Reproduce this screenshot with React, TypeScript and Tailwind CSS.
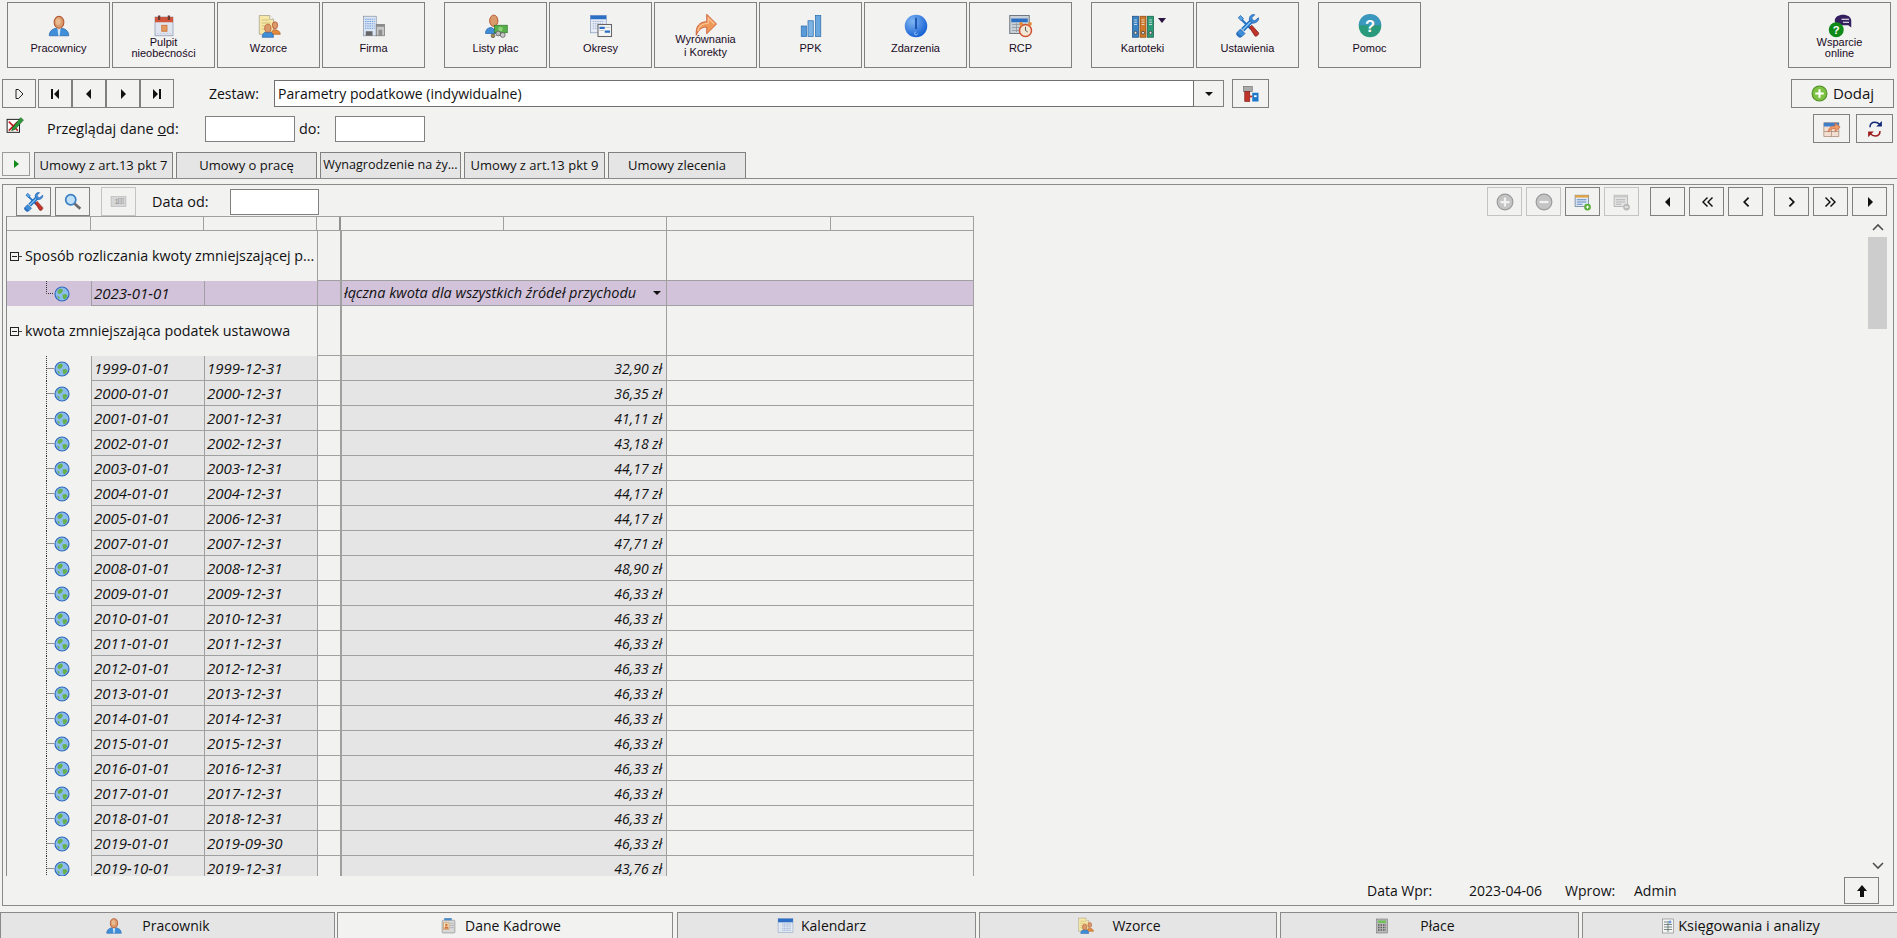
import React from "react";

type P = { s?: number };
const Svg = ({ s = 24, children }: P & { children: React.ReactNode }) => (
  <svg width={s} height={s} viewBox="0 0 32 32" className="shrink-0">{children}</svg>
);

const Bust = () => (
  <>
    <path d="M3 29c0-6 4-9 9-10l4 3 4-3c5 1 9 4 9 10z" fill="#3f8fd8" stroke="#2a68ad" />
    <path d="M14 20h4l-1 9h-2z" fill="#cfe3f4" />
    <ellipse cx="16" cy="11" rx="6.5" ry="8" fill="#d99a6c" stroke="#b5532c" strokeWidth="1.4" />
    <ellipse cx="15" cy="10" rx="3.4" ry="4.5" fill="#e9b98f" />
  </>
);
const IPerson = ({ s }: P) => <Svg s={s}><Bust /></Svg>;
const ICalendar = ({ s }: P) => (
  <Svg s={s}>
    <rect x="4" y="4" width="24" height="25" fill="#dfe4ef" stroke="#8d9bb3" />
    <rect x="4" y="4" width="24" height="7" fill="#d0553b" />
    <rect x="8" y="2" width="3" height="6" fill="#6b3b30" />
    <rect x="21" y="2" width="3" height="6" fill="#6b3b30" />
    <rect x="13" y="15" width="7" height="8" fill="#e39a5c" stroke="#c96a35" />
    <path d="M7 26h18" stroke="#b5bccb" strokeDasharray="2 2" />
  </Svg>
);
const IWzorce = ({ s }: P) => (
  <Svg s={s}>
    <path d="M3 2h14l5 5v20H3z" fill="#f5e8a8" stroke="#a5a08a" />
    <path d="M6 8h10M6 12h12M6 16h6M6 20h5" stroke="#c9b36a" />
    <path d="M17 2v5h5" fill="#fff" stroke="#a5a08a" />
    <ellipse cx="24" cy="15" rx="3.6" ry="4.6" fill="#d99a6c" stroke="#b5532c" />
    <path d="M19 27c0-4 2-6 5-6s7 2 7 6z" fill="#e38b3a" stroke="#b5632c" />
    <path d="M7 31c0-5 3-7 6-7h3c3 0 6 2 6 7z" fill="#3f8fd8" stroke="#2a68ad" />
    <ellipse cx="14.5" cy="19" rx="4.2" ry="5.4" fill="#d99a6c" stroke="#b5532c" />
  </Svg>
);
const IFirma = ({ s }: P) => (
  <Svg s={s}>
    <rect x="2" y="3" width="17" height="26" fill="#dbe6f5" stroke="#8c97a8" />
    <path d="M4 7h13M4 10h13M4 13h13M4 16h13M4 19h13" stroke="#6f9bd6" strokeDasharray="2 1" strokeWidth="1.6" />
    <rect x="5" y="23" width="9" height="6" fill="#666" />
    <rect x="19" y="14" width="11" height="15" fill="#c8c8c8" stroke="#777" />
    <rect x="19" y="14" width="11" height="3" fill="#8a8a8a" />
    <rect x="22" y="21" width="5" height="8" fill="#8e8e8e" />
  </Svg>
);
const IListy = ({ s }: P) => (
  <Svg s={s}>
    <path d="M2 26c0-5 3-8 8-8l3 2 3-2c3 0 5 1 6 3v5z" fill="#3f8fd8" stroke="#2a68ad" />
    <ellipse cx="13" cy="9" rx="5.5" ry="7.5" fill="#d99a6c" stroke="#b5532c" strokeWidth="1.3" />
    <rect x="14" y="15" width="17" height="10" fill="#58b04a" stroke="#2f7a2b" />
    <circle cx="22" cy="20" r="3" fill="#8fd178" />
    <circle cx="12" cy="29" r="2.5" fill="#a58a4b" stroke="#555" />
    <circle cx="19" cy="26" r="3.2" fill="#bbb" stroke="#555" />
    <circle cx="25" cy="28" r="3.2" fill="#ccc" stroke="#555" />
  </Svg>
);
const IOkresy = ({ s }: P) => (
  <Svg s={s}>
    <rect x="2" y="2" width="21" height="23" fill="#e6ebf6" stroke="#8ba0c0" />
    <rect x="2" y="2" width="21" height="5" fill="#2d6fc4" />
    <path d="M5 10h15M5 13h15M5 16h15M5 19h15" stroke="#a3b3cf" strokeWidth="1.5" strokeDasharray="2 1" />
    <rect x="12" y="14" width="18" height="16" fill="#f5f5f5" stroke="#666" strokeWidth="1.4" />
    <rect x="14" y="17" width="7" height="3" fill="#2d6fc4" />
    <rect x="21" y="22" width="7" height="3" fill="#2d6fc4" />
    <path d="M14 22h6M22 18h6" stroke="#bbb" />
  </Svg>
);
const IArrow = ({ s }: P) => (
  <Svg s={s}>
    <path d="M3 31C2 19 7 13 17 13V3l13 13-13 13v-9c-7 0-11 4-14 11z" fill="#f09a5a" stroke="#c95a33" strokeWidth="1.2" />
    <path d="M5 25c2-7 6-10 14-10V8l8 8" fill="none" stroke="#fbc79a" strokeWidth="1.5" />
  </Svg>
);
const IPPK = ({ s }: P) => (
  <Svg s={s}>
    <rect x="3" y="16" width="7" height="14" fill="#5a9ad8" stroke="#2d6fb0" />
    <rect x="12" y="9" width="7" height="21" fill="#7eb4e4" stroke="#2d6fb0" />
    <rect x="22" y="2" width="7" height="28" fill="#6aa7de" stroke="#2d6fb0" />
  </Svg>
);
const IZdarzenia = ({ s }: P) => (
  <Svg s={s}>
    <defs>
      <radialGradient id="zd" cx="0.35" cy="0.3" r="0.8">
        <stop offset="0" stopColor="#7fb6f2" />
        <stop offset="1" stopColor="#0b57d0" />
      </radialGradient>
    </defs>
    <circle cx="16" cy="16" r="15" fill="url(#zd)" />
    <path d="M16 5v15" stroke="#0a3f9e" strokeWidth="2" />
    <path d="M16 24a2 2 0 1 0 2 2" fill="none" stroke="#9cc4f4" strokeWidth="1.2" />
  </Svg>
);
const IRcp = ({ s }: P) => (
  <Svg s={s}>
    <rect x="1" y="2" width="26" height="24" fill="#c9d0d6" stroke="#6d7680" strokeWidth="1.3" />
    <rect x="3" y="6" width="22" height="5" fill="#2d6fc4" />
    <path d="M4 14h20M4 18h20M4 22h20M10 12v12M17 12v12" stroke="#8a94a0" />
    <circle cx="22" cy="22" r="8" fill="#f2e7d5" stroke="#d2502e" strokeWidth="2" />
    <path d="M22 17v5l3 2" fill="none" stroke="#555" strokeWidth="1.3" />
    <circle cx="16" cy="13" r="2.5" fill="#e48a35" />
    <circle cx="28" cy="13" r="2.5" fill="#e48a35" />
  </Svg>
);
const IKartoteki = ({ s }: P) => (
  <Svg s={s}>
    <rect x="2" y="3" width="8" height="28" fill="#3a83c4" stroke="#1f4f80" />
    <rect x="12" y="3" width="8" height="28" fill="#d07a2a" stroke="#8a4a14" />
    <rect x="22" y="3" width="8" height="28" fill="#2d9a78" stroke="#17604a" />
    <path d="M4 8h4M4 11h4M4 14h4M14 8h4M14 11h4M14 14h4M24 8h4M24 11h4M24 14h4" stroke="#eee" />
    <circle cx="6" cy="25" r="2" fill="#e5e5e5" stroke="#333" />
    <circle cx="16" cy="25" r="2" fill="#e5e5e5" stroke="#333" />
    <circle cx="26" cy="25" r="2" fill="#e5e5e5" stroke="#333" />
  </Svg>
);
const ITools = ({ s }: P) => (
  <Svg s={s}>
    <path d="M7 7l13 13" stroke="#2a76c8" strokeWidth="3" />
    <path d="M3 5l3-3 4 4-3 3z" fill="#5aa6e6" stroke="#1d5fb0" />
    <path d="M18 18l3-3 9 10c1 2-3 6-5 4z" fill="#c0342a" stroke="#7d1a14" />
    <path d="M9 21L21 9" stroke="#1d6fc4" strokeWidth="6" />
    <path d="M9 21L21 9" stroke="#8cc8f2" strokeWidth="2" />
    <path d="M30 5l-5 4-3-1-1-3 4-4c-4-1-8 2-7 7l3 4c4 1 10-2 9-7z" fill="#3f8ed8" stroke="#1d5fb0" />
    <path d="M2 26l5 4-1 1c-3 0-6-3-5-6l1 1zM2 24l4-4 6 6-4 4c-4 1-7-2-6-6z" fill="#3f8ed8" stroke="#1d5fb0" />
  </Svg>
);
const IHelp = ({ s }: P) => (
  <Svg s={s}>
    <circle cx="16" cy="16" r="15" fill="#2a9a7c" />
    <path d="M1 15a15 15 0 0 1 30 0z" fill="#3a97bd" />
    <text x="16" y="24" textAnchor="middle" fontSize="22" fontWeight="700" fill="#fff" fontFamily="Liberation Sans, sans-serif">?</text>
  </Svg>
);
const ISupport = ({ s }: P) => (
  <Svg s={s}>
    <path d="M9 9c0-5 5-8 11-8s11 3 11 8v9l-4-3H18c-5 0-9-2-9-6z" fill="#35205f" />
    <path d="M18 7h10M20 11h8" stroke="#fff" strokeWidth="1.4" />
    <circle cx="11" cy="21" r="10" fill="#0f8a18" />
    <text x="11" y="27" textAnchor="middle" fontSize="15" fontWeight="700" fill="#fff" fontFamily="Liberation Sans, sans-serif">?</text>
  </Svg>
);
const IPlus = ({ s, off }: P & { off?: boolean }) => (
  <Svg s={s}>
    <circle cx="16" cy="16" r="14" fill={off ? "#c4c4c4" : "#7dc142"} stroke={off ? "#999" : "#4d8f24"} strokeWidth="2" />
    <path d="M16 8v16M8 16h16" stroke={off ? "#f1f1f1" : "#fff"} strokeWidth="4" />
  </Svg>
);
const IMinus = ({ s }: P) => (
  <Svg s={s}>
    <circle cx="16" cy="16" r="14" fill="#c4c4c4" stroke="#999" strokeWidth="2" />
    <path d="M8 16h16" stroke="#f1f1f1" strokeWidth="4" />
  </Svg>
);
const ISheet = ({ s, off }: P & { off?: boolean }) => (
  <Svg s={s}>
    <rect x="2" y="4" width="24" height="20" fill={off ? "#e5e5e5" : "#dfe8f4"} stroke={off ? "#aaa" : "#6b7f99"} strokeWidth="1.4" />
    <rect x="2" y="4" width="24" height="4" fill={off ? "#c9c9c9" : "#e4a23d"} />
    <path d="M5 12h17M5 16h17M5 20h10" stroke={off ? "#aaa" : "#4a79b5"} strokeWidth="1.5" />
    <circle cx="24" cy="25" r="6" fill={off ? "#bbb" : "#56ad35"} />
    <path d={off ? "M21 25h6" : "M24 22v6M21 25h6"} stroke="#fff" strokeWidth="1.8" />
  </Svg>
);
const IGlobe = ({ s = 16 }: P) => (
  <Svg s={s}>
    <circle cx="16" cy="16" r="14" fill="#8abdec" stroke="#3268bd" strokeWidth="2.4" />
    <path d="M8 8l6-3 4 3-2 5-5 3-4-2zM17 17l7-1 3 4-5 7-4-2zM6 19l4 2 2 4-3 0z" fill="#66b04e" />
  </Svg>
);
const IStamp = ({ s }: P) => (
  <Svg s={s}>
    <rect x="4" y="4" width="14" height="8" fill="#aaa" stroke="#666" />
    <rect x="6" y="12" width="8" height="16" fill="#c0342a" stroke="#7d1a14" />
    <rect x="18" y="14" width="10" height="14" fill="#1c78c8" />
    <rect x="21" y="18" width="4" height="3" fill="#fff" />
    <path d="M14 20h4" stroke="#c0342a" strokeWidth="3" />
  </Svg>
);
const IExport = ({ s }: P) => (
  <Svg s={s}>
    <rect x="3" y="6" width="24" height="22" fill="#f3dfd1" stroke="#9a7a66" />
    <rect x="3" y="6" width="24" height="6" fill="#3f7fca" />
    <path d="M3 20h24M15 12v16" stroke="#9a7a66" />
    <path d="M10 21c0-7 5-10 11-10V6l8 7-8 7v-5c-5 0-8 2-11 6z" fill="#ef9a68" stroke="#c8643a" />
  </Svg>
);
const IRefresh = ({ s }: P) => (
  <Svg s={s}>
    <path d="M8 13c0-5 3-8 8-8 3 0 5 1 7 3" fill="none" stroke="#142a78" strokeWidth="2.4" />
    <path d="M27 3v9h-9z" fill="#142a78" />
    <path d="M24 19c0 5-3 8-8 8-3 0-5-1-7-3" fill="none" stroke="#9c1c1c" strokeWidth="2.4" />
    <path d="M5 29v-9h9z" fill="#9c1c1c" />
  </Svg>
);
const ICheckPen = ({ s }: P) => (
  <Svg s={s}>
    <rect x="2" y="6" width="22" height="23" fill="#fff" stroke="#222" strokeWidth="1.8" />
    <path d="M5 26L21 10M5 10l16 16" stroke="#c21818" strokeWidth="2.8" />
    <path d="M12 20L26 3l5 4-15 17-6 2z" fill="#2c9a3a" stroke="#114d18" />
  </Svg>
);
const ICard = ({ s }: P) => (
  <Svg s={s}>
    <rect x="8" y="2" width="14" height="6" fill="#4a8fd0" />
    <rect x="4" y="6" width="24" height="24" rx="2" fill="#d8d8d8" stroke="#777" />
    <rect x="7" y="11" width="10" height="12" fill="#f3e3c4" stroke="#c7873e" />
    <circle cx="12" cy="15" r="2.4" fill="#d2743a" />
    <path d="M8 22c0-3 2-4 4-4s4 1 4 4z" fill="#d2743a" />
    <path d="M19 12h7M19 16h7M19 20h7" stroke="#999" />
  </Svg>
);
const IMonth = ({ s }: P) => (
  <Svg s={s}>
    <rect x="2" y="3" width="28" height="26" fill="#dfe7f3" stroke="#8ca2c2" />
    <rect x="2" y="3" width="28" height="7" fill="#2d6fc4" />
    <path d="M10 13h16M10 17h16M10 21h16M10 25h16" stroke="#98aed0" strokeWidth="2" strokeDasharray="2 1" />
  </Svg>
);
const ICalc = ({ s }: P) => (
  <Svg s={s}>
    <rect x="5" y="2" width="22" height="28" fill="#b9b9b9" stroke="#666" />
    <rect x="8" y="5" width="16" height="5" fill="#6fc05a" />
    <path d="M8 14h16M8 19h16M8 24h16" stroke="#5a5a5a" strokeWidth="3" strokeDasharray="3 2" />
  </Svg>
);
const IBook = ({ s }: P) => (
  <Svg s={s}>
    <rect x="5" y="2" width="22" height="28" fill="#f4f4f4" stroke="#666" />
    <path d="M8 8h7M8 13h16M8 18h16M8 23h16M16 6v22" stroke="#5c6f6a" strokeWidth="1.6" />
    <path d="M20 5v6M17 8h6" stroke="#2266cc" strokeWidth="1.6" />
  </Svg>
);
const INumbers = ({ s }: P) => (
  <Svg s={s}>
    <rect x="2" y="7" width="28" height="18" fill="#d6d6d6" stroke="#aaa" />
    <text x="9" y="21" fontSize="13" fill="#888" fontFamily="Liberation Sans, sans-serif">1</text>
    <path d="M15 11h12M15 15h12M15 19h12" stroke="#999" strokeWidth="2" strokeDasharray="2 1" />
  </Svg>
);
const IMag = ({ s }: P) => (
  <Svg s={s}>
    <circle cx="12" cy="12" r="9" fill="#bfe0f8" stroke="#3a7fc4" strokeWidth="3" />
    <path d="M19 19l10 9" stroke="#6b6b6b" strokeWidth="5" />
  </Svg>
);

const Tri = ({ d, className = "" }: { d: string; className?: string }) => (
  <svg width="16" height="16" viewBox="0 0 16 16" className={className}><path d={d} fill="#111" /></svg>
);

const tools: [string, React.ReactNode, string][] = [
  ["Pracownicy", <IPerson />, ""],
  ["Pulpit\nnieobecności", <ICalendar />, ""],
  ["Wzorce", <IWzorce />, ""],
  ["Firma", <IFirma />, ""],
  ["Listy płac", <IListy />, "ml-[17px]"],
  ["Okresy", <IOkresy />, ""],
  ["Wyrównania\ni Korekty", <IArrow />, ""],
  ["PPK", <IPPK />, ""],
  ["Zdarzenia", <IZdarzenia />, ""],
  ["RCP", <IRcp />, ""],
  ["Kartoteki", <IKartoteki />, "ml-[17px]"],
  ["Ustawienia", <ITools />, ""],
  ["Pomoc", <IHelp />, "ml-[17px]"],
];

const ToolBtn = ({ label, icon, extra = "", caret }: { label: string; icon: React.ReactNode; extra?: string; caret?: boolean }) => {
  const wide = label.startsWith("Wyr");
  return (
    <div className={`relative flex h-[66px] w-[103px] shrink-0 flex-col items-center border border-[#808080] ${wide ? "pt-[10px]" : "pt-[12px]"} ${extra}`}>
      <div className="flex h-[22px] items-center justify-center">{icon}</div>
      <div className={`flex h-[22px] flex-col items-center justify-center text-center text-[11px] text-[#1a0a24] ${wide ? "leading-[13px]" : "leading-[11px]"}`}>
        {label.split("\n").map((l) => <span key={l}>{l}</span>)}
      </div>
      {caret && <span className="absolute left-[66px] top-[15px] h-0 w-0 border-x-[4px] border-t-[5px] border-x-transparent border-t-[#2a1440]" />}
    </div>
  );
};

const Btn = ({ w, children, off, extra = "" }: { w: string; children?: React.ReactNode; off?: boolean; extra?: string }) => (
  <div className={`flex h-[29px] shrink-0 items-center justify-center border ${off ? "border-[#c4c4c4]" : "border-[#808080]"} ${w} ${extra}`}>{children}</div>
);

const rows: [string, string, string][] = [
  ["1999-01-01", "1999-12-31", "32,90 zł"],
  ["2000-01-01", "2000-12-31", "36,35 zł"],
  ["2001-01-01", "2001-12-31", "41,11 zł"],
  ["2002-01-01", "2002-12-31", "43,18 zł"],
  ["2003-01-01", "2003-12-31", "44,17 zł"],
  ["2004-01-01", "2004-12-31", "44,17 zł"],
  ["2005-01-01", "2006-12-31", "44,17 zł"],
  ["2007-01-01", "2007-12-31", "47,71 zł"],
  ["2008-01-01", "2008-12-31", "48,90 zł"],
  ["2009-01-01", "2009-12-31", "46,33 zł"],
  ["2010-01-01", "2010-12-31", "46,33 zł"],
  ["2011-01-01", "2011-12-31", "46,33 zł"],
  ["2012-01-01", "2012-12-31", "46,33 zł"],
  ["2013-01-01", "2013-12-31", "46,33 zł"],
  ["2014-01-01", "2014-12-31", "46,33 zł"],
  ["2015-01-01", "2015-12-31", "46,33 zł"],
  ["2016-01-01", "2016-12-31", "46,33 zł"],
  ["2017-01-01", "2017-12-31", "46,33 zł"],
  ["2018-01-01", "2018-12-31", "46,33 zł"],
  ["2019-01-01", "2019-09-30", "46,33 zł"],
  ["2019-10-01", "2019-12-31", "43,76 zł"],
];

const rowCols = "grid grid-cols-[84px_113px_113px_23px_326px_308px]";
const line = "border-[#a0a0a0]";

const Tree = ({ half }: { half?: boolean }) => (
  <div className="flex h-full items-center pl-[39px]">
    <svg width="8" height="25" viewBox="0 0 8 25" className="shrink-0">
      <path d={half ? "M0.5 0V12.5H8" : "M0.5 0V25M0.5 12.5H8"} fill="none" stroke="#333" strokeDasharray="1 1" />
    </svg>
    <IGlobe />
  </div>
);

const GroupRow = ({ title }: { title: string }) => (
  <div className={`${rowCols} h-[50px]`}>
    <div className="col-span-3 flex items-center pl-[3px]">
      <span className="flex h-[9px] w-[9px] shrink-0 items-center justify-center border border-[#222]">
        <span className="h-px w-[5px] bg-[#222]" />
      </span>
      <span className="w-[2px] shrink-0 border-t border-dotted border-[#444]" />
      <span className="ml-[4px] truncate text-[14.3px]">{title}</span>
    </div>
    <div className={`border-b border-l ${line}`} />
    <div className={`border-b border-l-2 ${line}`} />
    <div className={`border-b border-l border-r ${line}`} />
  </div>
);

const Tab = ({ w, children, extra = "" }: { w: string; children: React.ReactNode; extra?: string }) => (
  <div className={`flex h-[26px] items-center justify-center whitespace-nowrap border border-b-0 border-[#808080] bg-[#e5e5e5] text-[13px] ${w} ${extra}`}>{children}</div>
);

const BottomTab = ({ w, ml = "", gap, pad = "", size = "text-[14px]", icon, label, active }: { w: string; ml?: string; gap: string; pad?: string; size?: string; icon: React.ReactNode; label: string; active?: boolean }) => (
  <div className={`flex h-[26px] shrink-0 items-center justify-center border-x border-t border-[#8a8a8a] ${size} ${active ? "bg-[#f2f2f1]" : "bg-[#e5e5e5]"} ${w} ${ml} ${gap} ${pad}`}>
    {icon}
    <span>{label}</span>
  </div>
);

const Field = ({ w }: { w: string }) => <div className={`h-[26px] shrink-0 border border-[#808080] bg-white ${w}`} />;

export default function App() {
  return (
    <div className="flex h-[938px] w-[1897px] flex-col overflow-hidden bg-[#f2f2f1] text-[#111] [font-family:'Liberation_Sans',sans-serif]">
      <div className="flex h-[68px] shrink-0 gap-[2px] pl-[7px] pr-[6px] pt-[2px]">
        {tools.map(([label, icon, extra]) => (
          <ToolBtn key={label} label={label} icon={icon} extra={extra} caret={label === "Kartoteki"} />
        ))}
        <ToolBtn label={"Wsparcie\nonline"} icon={<ISupport />} extra="ml-auto" />
      </div>

      <div className="mt-[11px] flex h-[29px] shrink-0 items-center pl-[2px] pr-[3px] [font-family:'Open_Sans',sans-serif] text-[14px]">
        <Btn w="w-[34px]">
          <svg width="16" height="16" viewBox="0 0 16 16"><path d="M5 3.5h2.5L12 8l-4.5 4.5H5z" fill="none" stroke="#222" /></svg>
        </Btn>
        <Btn w="w-[34px]" extra="ml-[2px]"><Tri d="M4 3h2v10H4zM12 3v10L7 8z" /></Btn>
        <Btn w="w-[34px]"><Tri d="M10 3v10L5 8z" /></Btn>
        <Btn w="w-[34px]"><Tri d="M6 3v10l5-5z" /></Btn>
        <Btn w="w-[34px]"><Tri d="M4 3v10l5-5zM10 3h2v10h-2z" /></Btn>
        <span className="ml-[35px] w-[65px]">Zestaw:</span>
        <div className="flex h-[27px] w-[920px] items-center border border-[#707070] bg-white pl-[3px]">Parametry podatkowe (indywidualne)</div>
        <div className="flex h-[27px] w-[30px] items-center justify-center border border-l-0 border-[#808080]">
          <span className="h-0 w-0 border-x-[4px] border-t-[4px] border-x-transparent border-t-[#111]" />
        </div>
        <Btn w="w-[37px]" extra="ml-[8px]"><IStamp s={20} /></Btn>
        <Btn w="w-[103px]" extra="ml-auto gap-[5px] text-[15px]"><IPlus s={17} />Dodaj</Btn>
      </div>

      <div className="mt-[6px] flex h-[29px] shrink-0 items-center pl-[6px] pr-[4px] [font-family:'Open_Sans',sans-serif] text-[14.4px]">
        <div className="self-start pt-[2px]"><ICheckPen s={18} /></div>
        <span className="ml-[23px] w-[158px]">Przeglądaj dane <span className="underline">o</span>d:</span>
        <Field w="w-[90px]" />
        <span className="ml-[4px] w-[36px]">do:</span>
        <Field w="w-[90px]" />
        <Btn w="w-[37px]" extra="ml-auto"><IExport s={20} /></Btn>
        <Btn w="w-[37px]" extra="ml-[6px]"><IRefresh s={20} /></Btn>
      </div>

      <div className="mt-[9px] flex h-[27px] shrink-0 items-start border-b border-[#8a8a8a] pl-[2px] [font-family:'Open_Sans',sans-serif]">
        <div className="flex h-[24px] w-[28px] items-center justify-center border border-[#9a9a9a]">
          <span className="h-0 w-0 border-y-[4px] border-l-[5px] border-y-transparent border-l-[#118a18]" />
        </div>
        <Tab w="w-[139px]" extra="ml-[4px]">Umowy z art.13 pkt 7</Tab>
        <Tab w="w-[141px]" extra="ml-[3px]">Umowy o pracę</Tab>
        <Tab w="w-[141px]" extra="ml-[3px]"><span className="text-[12.6px]">Wynagrodzenie na ży...</span></Tab>
        <Tab w="w-[141px]" extra="ml-[3px]">Umowy z art.13 pkt 9</Tab>
        <Tab w="w-[138px]" extra="ml-[3px]">Umowy zlecenia</Tab>
      </div>

      <div className="ml-[2px] mr-[3px] mt-[5px] flex h-[722px] shrink-0 flex-col border border-[#8a8a8a] pl-[3px] pr-[6px] pt-[2px] [font-family:'Open_Sans',sans-serif] text-[14px]">
        <div className="flex h-[29px] shrink-0 items-center">
          <Btn w="w-[35px]" extra="ml-[10px]"><ITools s={20} /></Btn>
          <Btn w="w-[35px]" extra="ml-[4px]"><IMag s={18} /></Btn>
          <Btn w="w-[35px]" extra="ml-[11px]" off><INumbers s={17} /></Btn>
          <span className="ml-[16px] w-[78px] text-[14.4px]">Data od:</span>
          <Field w="w-[89px]" />
          <Btn w="w-[35px]" extra="ml-auto" off><IPlus s={18} off /></Btn>
          <Btn w="w-[35px]" extra="ml-[4px]" off><IMinus s={18} /></Btn>
          <Btn w="w-[35px]" extra="ml-[4px]"><ISheet s={18} /></Btn>
          <Btn w="w-[35px]" extra="ml-[4px]" off><ISheet s={18} off /></Btn>
          <Btn w="w-[35px]" extra="ml-[11px]"><Tri d="M10 3v10L5 8z" /></Btn>
          <Btn w="w-[35px]" extra="ml-[4px]"><Tri d="M8 3L3 8l5 5 1-1-4-4 4-4zM13 3L8 8l5 5 1-1-4-4 4-4z" /></Btn>
          <Btn w="w-[35px]" extra="ml-[4px]"><Tri d="M10 3L5 8l5 5 1.2-1.2L7.4 8l3.8-3.8z" /></Btn>
          <Btn w="w-[35px]" extra="ml-[11px]"><Tri d="M6 3l5 5-5 5-1.2-1.2L8.6 8 4.8 4.2z" /></Btn>
          <Btn w="w-[35px]" extra="ml-[4px]"><Tri d="M3 3l5 5-5 5-1-1 4-4-4-4zM8 3l5 5-5 5-1-1 4-4-4-4z" /></Btn>
          <Btn w="w-[35px]" extra="ml-[4px]"><Tri d="M6 3v10l5-5z" /></Btn>
        </div>

        <div className="flex h-[660px] shrink-0 overflow-hidden">
          <div className="w-[968px] shrink-0 border-l border-[#8a8a8a]">
            <div className={`grid h-[15px] grid-cols-[84px_113px_113px_24px_163px_163px_164px_143px] border-y border-r ${line}`}>
              <div className={`border-r ${line}`} />
              <div className={`border-r ${line}`} />
              <div className={`border-r ${line}`} />
              <div className="border-r-2 border-[#909090]" />
              <div className={`border-r ${line}`} />
              <div className={`border-r ${line}`} />
              <div className={`border-r ${line}`} />
              <div />
            </div>
            <GroupRow title="Sposób rozliczania kwoty zmniejszającej p..." />
            <div className={`${rowCols} h-[25px] bg-[#d2c3da] italic`}>
              <Tree half />
              <div className={`flex items-center border-b border-l pl-[2px] text-[15px] ${line}`}>2023-01-01</div>
              <div className={`border-b border-l ${line}`} />
              <div className={`border-b border-l ${line}`} />
              <div className={`flex items-center justify-between border-b border-l-2 pl-[2px] pr-[5px] text-[14.5px] ${line}`}>
                <span>łączna kwota dla wszystkich źródeł przychodu</span>
                <span className="h-0 w-0 border-x-[4px] border-t-[4px] border-x-transparent border-t-[#111]" />
              </div>
              <div className={`border-b border-l border-r ${line}`} />
            </div>
            <GroupRow title="kwota zmniejszająca podatek ustawowa" />
            {rows.map(([a, b, c]) => (
              <div key={a} className={`${rowCols} h-[25px] italic`}>
                <Tree />
                <div className={`flex items-center border-b border-l bg-[#e5e5e5] pl-[2px] text-[15px] ${line}`}>{a}</div>
                <div className={`flex items-center border-b border-l bg-[#e5e5e5] pl-[2px] text-[15px] ${line}`}>{b}</div>
                <div className={`border-b border-l ${line}`} />
                <div className={`flex items-center justify-end border-b border-l-2 bg-[#e5e5e5] pr-[4px] ${line}`}>{c}</div>
                <div className={`border-b border-l border-r ${line}`} />
              </div>
            ))}
          </div>
          <div className="ml-auto flex w-[19px] shrink-0 flex-col items-center">
            <div className="flex h-[21px] w-full items-center justify-center">
              <svg width="12" height="8" viewBox="0 0 12 8"><path d="M1 7l5-5 5 5" fill="none" stroke="#505050" strokeWidth="1.6" /></svg>
            </div>
            <div className="h-[92px] w-full bg-[#cdcdcd]" />
            <div className="flex-1" />
            <div className="flex h-[20px] w-full items-center justify-center">
              <svg width="12" height="8" viewBox="0 0 12 8"><path d="M1 1l5 5 5-5" fill="none" stroke="#505050" strokeWidth="1.6" /></svg>
            </div>
          </div>
        </div>

        <div className="flex flex-1 items-center">
          <span className="ml-[1361px] w-[102px]">Data Wpr:</span>
          <span className="w-[96px]">2023-04-06</span>
          <span className="w-[69px]">Wprow:</span>
          <span>Admin</span>
          <div className="ml-auto mr-[8px] flex h-[27px] w-[35px] items-center justify-center border border-[#808080]">
            <Tri d="M8 2l5 6H10v6H6V8H3z" />
          </div>
        </div>
      </div>

      <div className="mt-[6px] flex shrink-0 [font-family:'Open_Sans',sans-serif]">
        <BottomTab w="w-[335px]" gap="gap-[19px]" pad="pr-[20px]" icon={<IPerson s={18} />} label="Pracownik" />
        <BottomTab w="w-[336px]" ml="ml-[2px]" gap="gap-[8px]" pad="pr-[9px]" icon={<ICard s={17} />} label="Dane Kadrowe" active />
        <BottomTab w="w-[299px]" ml="ml-[4px]" gap="gap-[7px]" pad="pr-[10px]" icon={<IMonth s={17} />} label="Kalendarz" />
        <BottomTab w="w-[298px]" ml="ml-[3px]" gap="gap-[18px]" pad="pr-[18px]" icon={<IWzorce s={17} />} label="Wzorce" />
        <BottomTab w="w-[299px]" ml="ml-[3px]" gap="gap-[30px]" pad="pr-[30px]" icon={<ICalc s={16} />} label="Płace" />
        <BottomTab w="w-[316px]" ml="ml-[3px]" gap="gap-[2px]" size="text-[14.5px]" icon={<IBook s={16} />} label="Księgowania i analizy" />
      </div>
    </div>
  );
}
